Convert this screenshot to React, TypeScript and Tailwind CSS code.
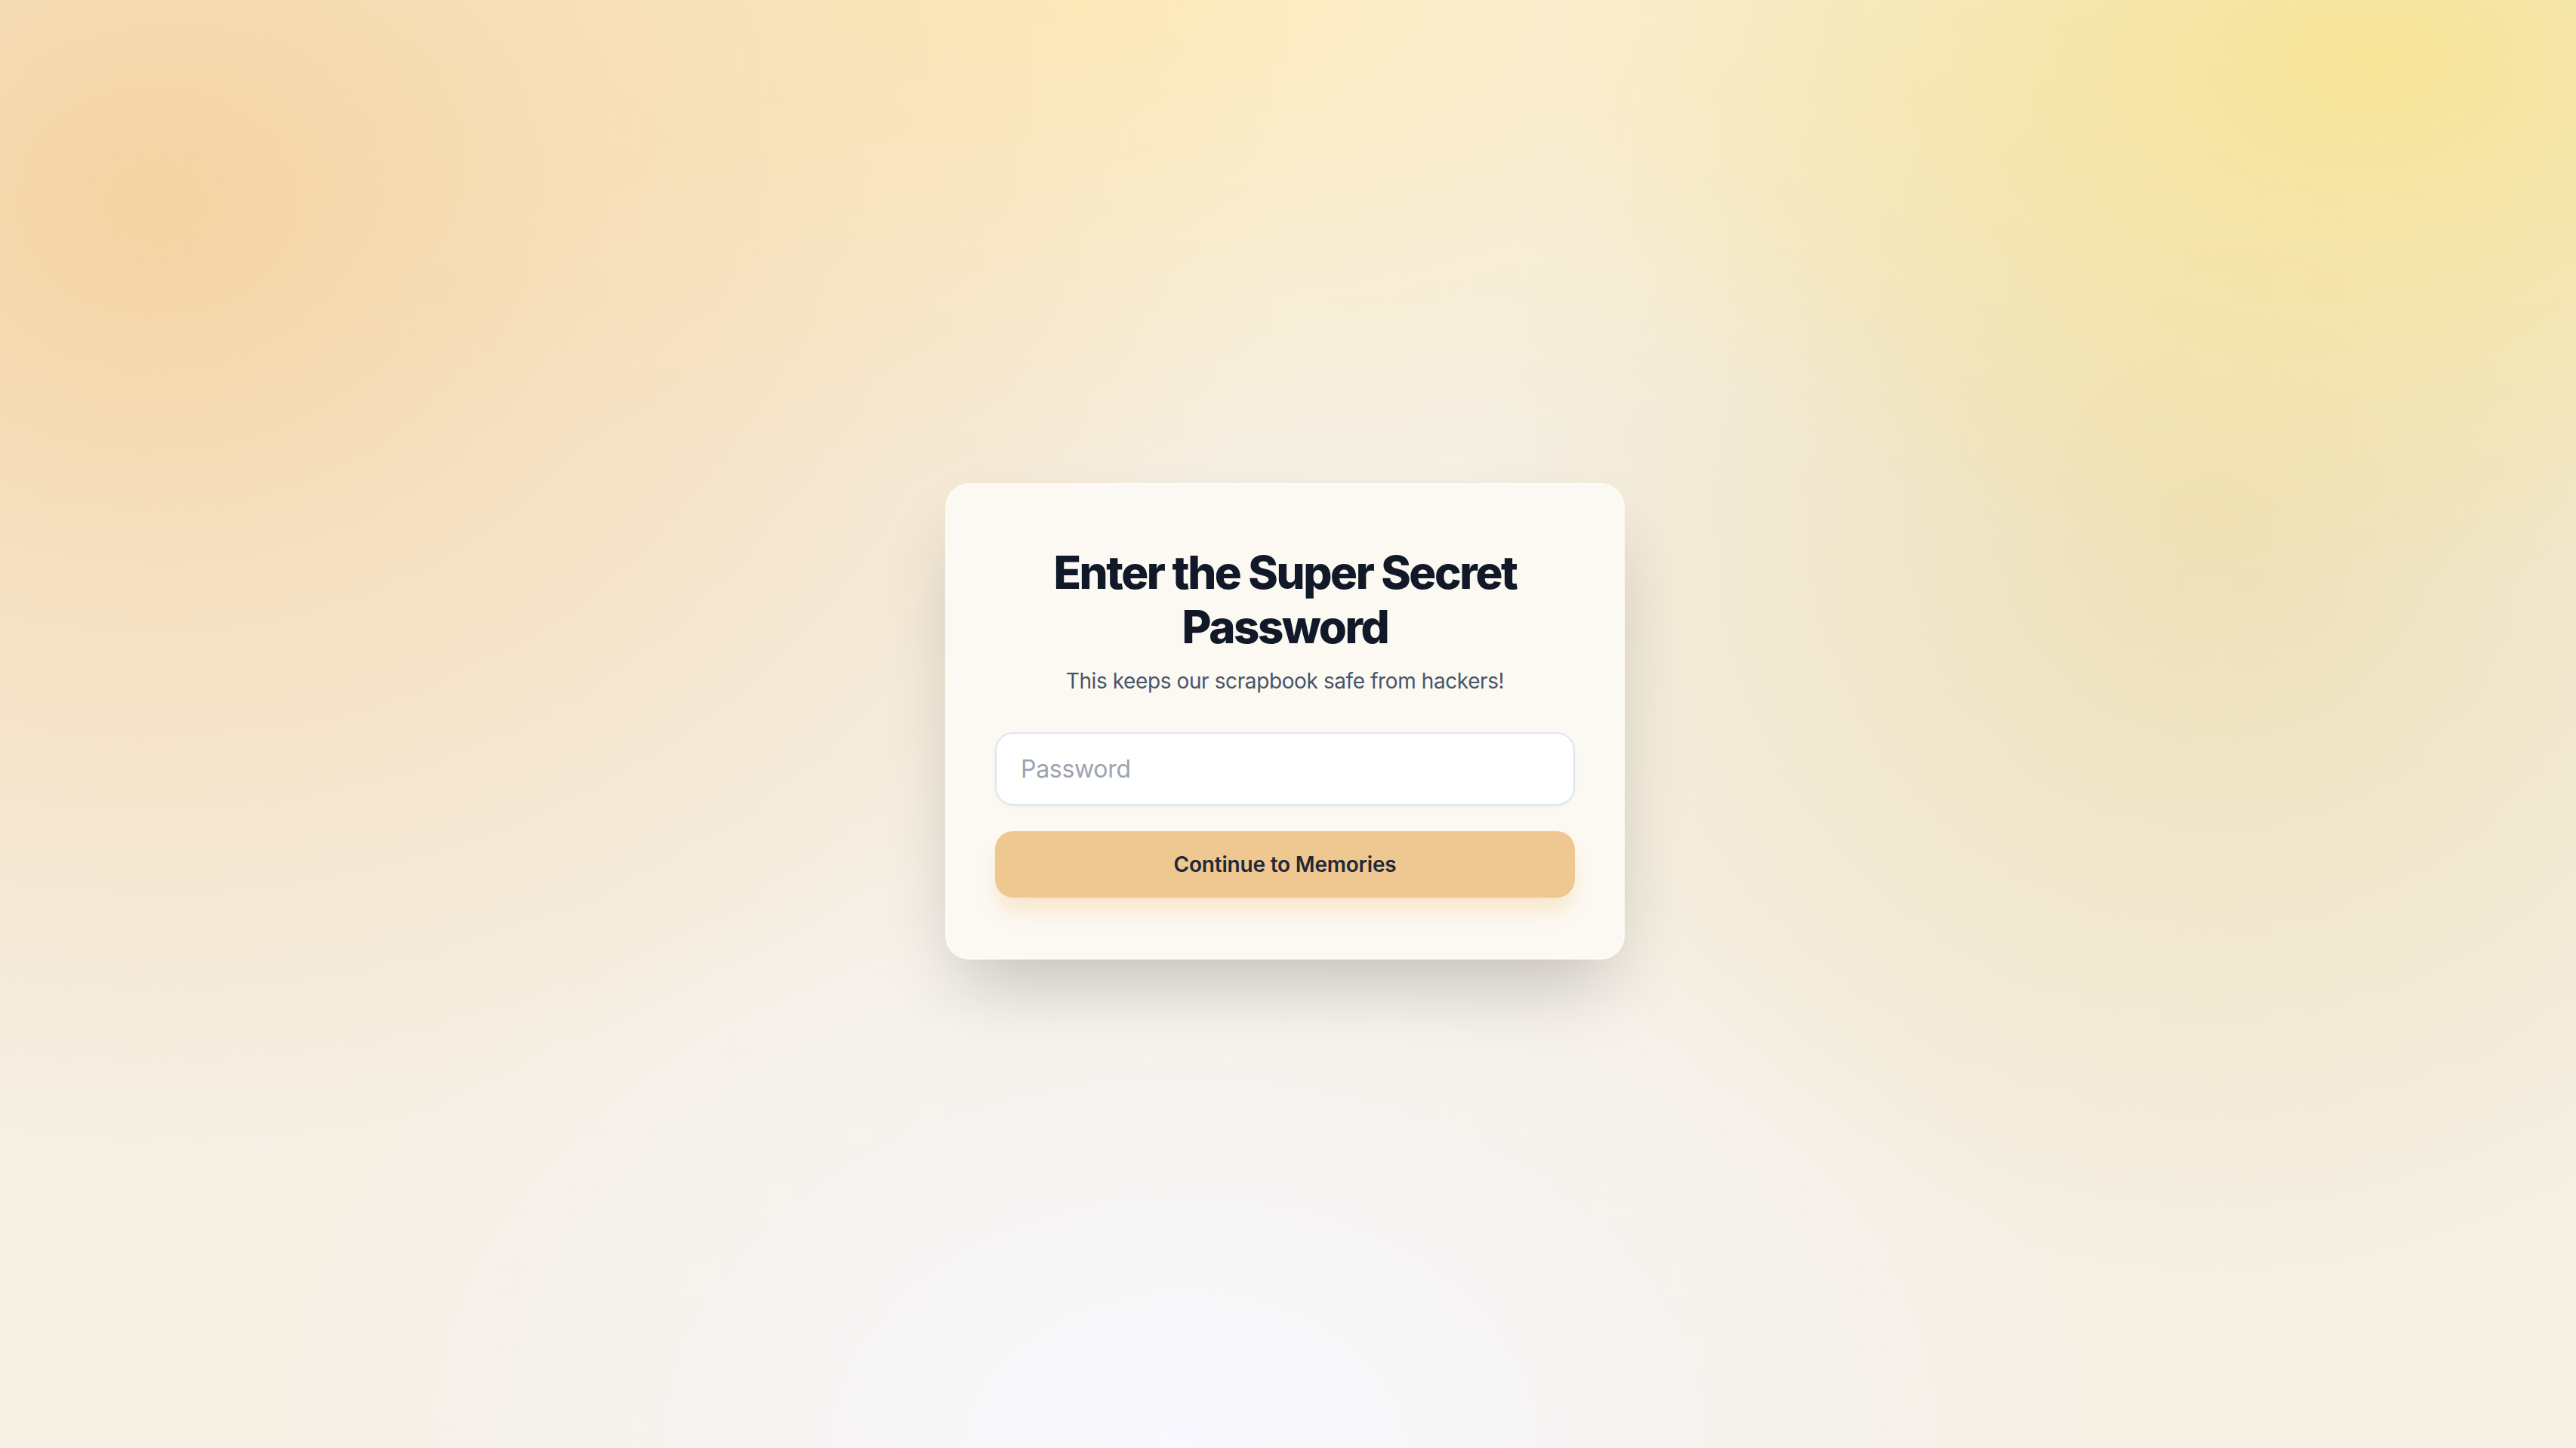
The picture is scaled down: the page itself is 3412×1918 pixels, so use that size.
import React from "react";

export default function App() {
  return (
    <div
      className="min-h-screen w-full flex items-center justify-center pr-[8px] pb-[8px] bg-[#f5efe4] bg-[radial-gradient(ellipse_1500px_1250px_at_6%_14%,#f5d3a2_0%,rgba(246,214,168,0.6)_40%,rgba(245,209,158,0)_100%),radial-gradient(ellipse_1100px_700px_at_92%_4%,#f7e497_0%,rgba(247,228,151,0)_100%),radial-gradient(ellipse_1500px_650px_at_42%_0%,#fdebbb_0%,rgba(253,235,187,0)_100%),radial-gradient(ellipse_1000px_1000px_at_86%_36%,#eee0b6_0%,rgba(238,223,182,0)_100%),radial-gradient(ellipse_1200px_850px_at_46%_100%,#f8f9ff_0%,rgba(248,249,255,0)_100%)]"
      style={{ fontFamily: "Inter, 'Noto Sans', sans-serif" }}
    >
      <div className="w-[900px] rounded-[32px] border-2 border-white/40 bg-[#fcf9f3]/95 px-[64px] py-[80px] shadow-[0_50px_100px_-24px_rgba(0,0,0,0.22)]">
        <h1 className="text-center text-[60px] leading-[72px] font-extrabold tracking-[-2.4px] text-[#111827]">
          Enter the Super Secret Password
        </h1>
        <p className="mt-[16px] text-center text-[28px] leading-[40px] tracking-[-0.4px] text-[#475569]">
          This keeps our scrapbook safe from hackers!
        </p>
        <div className="mt-[48px] flex flex-col gap-[34px]">
          <input
            type="password"
            placeholder="Password"
            className="h-[97px] w-full rounded-[24px] border-2 border-[#dfe5f0] bg-white px-[32px] text-[32px] tracking-[-0.3px] text-[#111827] placeholder:text-[#9ca3af] shadow-[0_2px_4px_rgba(0,0,0,0.04)] outline-none"
          />
          <button className="h-[88px] w-full rounded-[24px] bg-[#efc891] text-[28px] font-semibold tracking-[-0.2px] text-[#1f2937] shadow-[0_20px_30px_-6px_rgba(245,200,140,0.45)]">
            Continue to Memories
          </button>
        </div>
      </div>
    </div>
  );
}
